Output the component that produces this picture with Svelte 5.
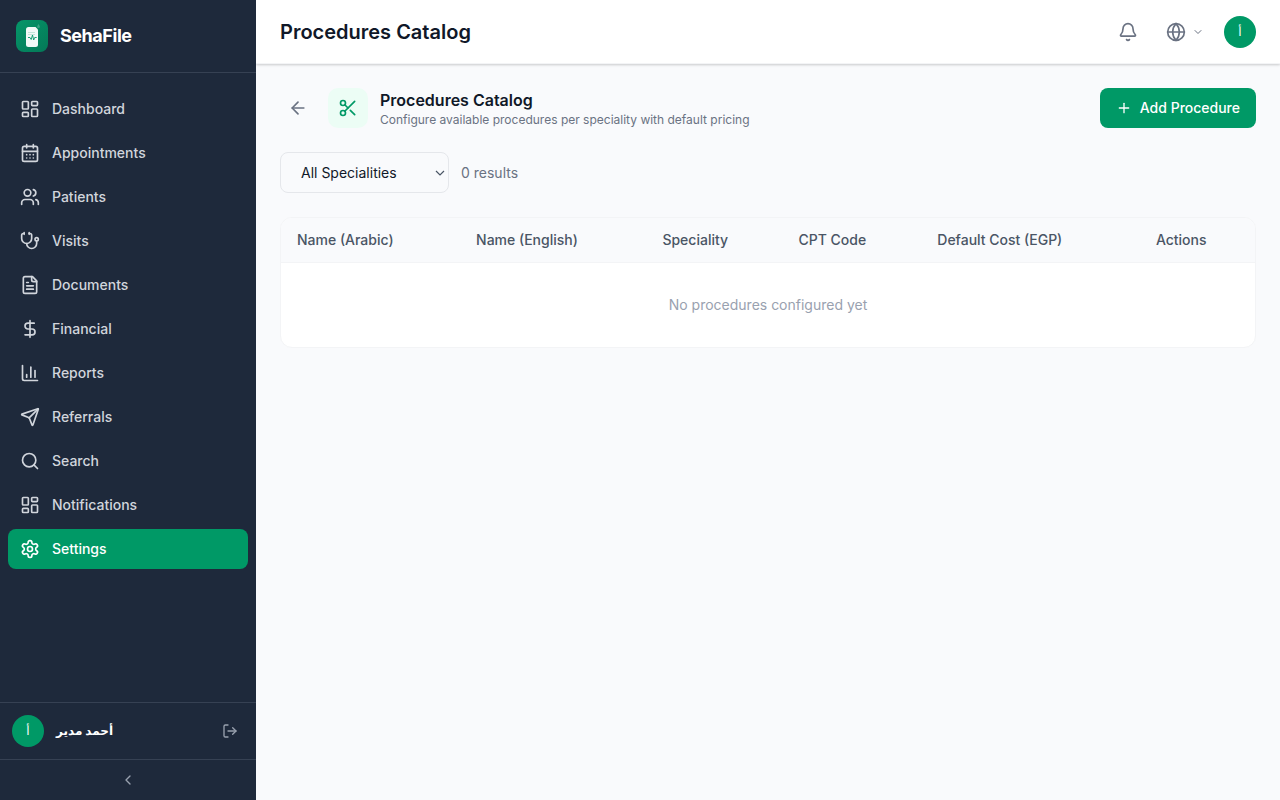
<script lang="ts">
	interface NavItem {
		label: string;
		icon: string[];
	}

	const grid = [
		'M4 3h5a1 1 0 0 1 1 1v7a1 1 0 0 1-1 1H4a1 1 0 0 1-1-1V4a1 1 0 0 1 1-1z',
		'M15 3h5a1 1 0 0 1 1 1v3a1 1 0 0 1-1 1h-5a1 1 0 0 1-1-1V4a1 1 0 0 1 1-1z',
		'M15 12h5a1 1 0 0 1 1 1v7a1 1 0 0 1-1 1h-5a1 1 0 0 1-1-1v-7a1 1 0 0 1 1-1z',
		'M4 16h5a1 1 0 0 1 1 1v3a1 1 0 0 1-1 1H4a1 1 0 0 1-1-1v-3a1 1 0 0 1 1-1z'
	];

	const navItems: NavItem[] = [
		{ label: 'Dashboard', icon: grid },
		{
			label: 'Appointments',
			icon: [
				'M8 2v4',
				'M16 2v4',
				'M5 4h14a2 2 0 0 1 2 2v14a2 2 0 0 1-2 2H5a2 2 0 0 1-2-2V6a2 2 0 0 1 2-2z',
				'M3 10h18',
				'M8 14h.01',
				'M12 14h.01',
				'M16 14h.01',
				'M8 18h.01',
				'M12 18h.01',
				'M16 18h.01'
			]
		},
		{
			label: 'Patients',
			icon: [
				'M16 21v-2a4 4 0 0 0-4-4H6a4 4 0 0 0-4 4v2',
				'M9 3a4 4 0 1 0 0 8a4 4 0 0 0 0-8z',
				'M22 21v-2a4 4 0 0 0-3-3.87',
				'M16 3.13a4 4 0 0 1 0 7.75'
			]
		},
		{
			label: 'Visits',
			icon: [
				'M11 2v2',
				'M5 2v2',
				'M5 3H4a2 2 0 0 0-2 2v4a6 6 0 0 0 12 0V5a2 2 0 0 0-2-2h-1',
				'M8 15a6 6 0 0 0 12 0v-3',
				'M20 8a2 2 0 1 0 0 4a2 2 0 0 0 0-4z'
			]
		},
		{
			label: 'Documents',
			icon: [
				'M15 2H6a2 2 0 0 0-2 2v16a2 2 0 0 0 2 2h12a2 2 0 0 0 2-2V7Z',
				'M14 2v4a2 2 0 0 0 2 2h4',
				'M10 9H8',
				'M16 13H8',
				'M16 17H8'
			]
		},
		{
			label: 'Financial',
			icon: ['M12 2v20', 'M17 5H9.5a3.5 3.5 0 0 0 0 7h5a3.5 3.5 0 0 1 0 7H6']
		},
		{
			label: 'Reports',
			icon: ['M3 3v16a2 2 0 0 0 2 2h16', 'M18 17V9', 'M13 17V5', 'M8 17v-3']
		},
		{
			label: 'Referrals',
			icon: [
				'M14.536 21.686a.5.5 0 0 0 .937-.024l6.5-19a.496.496 0 0 0-.635-.635l-19 6.5a.5.5 0 0 0-.024.937l7.93 3.18a2 2 0 0 1 1.112 1.11z',
				'm21.854 2.147-10.94 10.939'
			]
		},
		{ label: 'Search', icon: ['M11 3a8 8 0 1 0 0 16a8 8 0 0 0 0-16z', 'm21 21-4.3-4.3'] },
		{ label: 'Notifications', icon: grid },
		{
			label: 'Settings',
			icon: [
				'M12.22 2h-.44a2 2 0 0 0-2 2v.18a2 2 0 0 1-1 1.73l-.43.25a2 2 0 0 1-2 0l-.15-.08a2 2 0 0 0-2.73.73l-.22.38a2 2 0 0 0 .73 2.73l.15.1a2 2 0 0 1 1 1.72v.51a2 2 0 0 1-1 1.74l-.15.09a2 2 0 0 0-.73 2.73l.22.38a2 2 0 0 0 2.73.73l.15-.08a2 2 0 0 1 2 0l.43.25a2 2 0 0 1 1 1.73V20a2 2 0 0 0 2 2h.44a2 2 0 0 0 2-2v-.18a2 2 0 0 1 1-1.73l.43-.25a2 2 0 0 1 2 0l.15.08a2 2 0 0 0 2.73-.73l.22-.39a2 2 0 0 0-.73-2.73l-.15-.08a2 2 0 0 1-1-1.74v-.5a2 2 0 0 1 1-1.74l.15-.09a2 2 0 0 0 .73-2.73l-.22-.38a2 2 0 0 0-2.73-.73l-.15.08a2 2 0 0 1-2 0l-.43-.25a2 2 0 0 1-1-1.73V4a2 2 0 0 0-2-2z',
				'M12 9a3 3 0 1 0 0 6a3 3 0 0 0 0-6z'
			]
		}
	];

	const icons = {
		logout: ['m16 17 5-5-5-5', 'M21 12H9', 'M9 21H5a2 2 0 0 1-2-2V5a2 2 0 0 1 2-2h4'],
		chevronLeft: ['m15 18-6-6 6-6'],
		chevronDown: ['m6 9 6 6 6-6'],
		arrowLeft: ['m12 19-7-7 7-7', 'M19 12H5'],
		plus: ['M5 12h14', 'M12 5v14'],
		bell: [
			'M10.268 21a2 2 0 0 0 3.464 0',
			'M3.262 15.326A1 1 0 0 0 4 17h16a1 1 0 0 0 .74-1.673C19.41 13.956 18 12.499 18 8A6 6 0 0 0 6 8c0 4.499-1.411 5.956-2.738 7.326'
		],
		globe: [
			'M12 2a10 10 0 1 0 0 20a10 10 0 0 0 0-20z',
			'M12 2a14.5 14.5 0 0 0 0 20 14.5 14.5 0 0 0 0-20',
			'M2 12h20'
		],
		scissors: [
			'M6 3a3 3 0 1 0 0 6a3 3 0 0 0 0-6z',
			'M8.12 8.12 12 12',
			'M20 4 8.12 15.88',
			'M6 15a3 3 0 1 0 0 6a3 3 0 0 0 0-6z',
			'M14.8 14.8 20 20'
		]
	};

	const columns = [
		'Name (Arabic)',
		'Name (English)',
		'Speciality',
		'CPT Code',
		'Default Cost (EGP)',
		'Actions'
	];

	const specialities = ['Cardiology', 'Dermatology', 'Orthopedics', 'Pediatrics'];

	let active = $state('Settings');
	let speciality = $state('');
</script>

{#snippet icon(paths: string[], size: number)}
	<svg
		width={size}
		height={size}
		viewBox="0 0 24 24"
		fill="none"
		stroke="currentColor"
		stroke-width="2"
		stroke-linecap="round"
		stroke-linejoin="round"
		aria-hidden="true"
	>
		{#each paths as d}
			<path {d} />
		{/each}
	</svg>
{/snippet}

<div class="shell">
	<aside class="sidebar">
		<div class="brand">
			<svg class="logo" viewBox="0 0 32 32" aria-hidden="true">
				<defs>
					<linearGradient id="logo-bg" x1="0" y1="0" x2="1" y2="1">
						<stop offset="0" stop-color="#059669" />
						<stop offset="1" stop-color="#047857" />
					</linearGradient>
				</defs>
				<rect width="32" height="32" rx="8" fill="url(#logo-bg)" />
				<path
					d="M12.500 7h7l2.500 2.500V24.500a2.500 2.500 0 0 1-2.500 2.500h-7a2.500 2.500 0 0 1-2.500-2.500V9.500a2.500 2.500 0 0 1 2.500-2.500z"
					fill="#fff"
					fill-opacity=".95"
				/>
				<path d="M12 12.500h7M12 14.500h7" stroke="#059669" stroke-opacity=".25" stroke-width=".8" />
				<path
					d="M12 17.500h2l1.200 2 1.300-4.500 1.200 5 1-2.500h2"
					fill="none"
					stroke="#059669"
					stroke-width=".9"
				/>
				<path
					d="M22.500 4c1 1.500 1.300 2 1.300 2.800a1.300 1.300 0 0 1-2.600 0c0-.8.300-1.300 1.300-2.800z"
					fill="#fff"
					fill-opacity=".22"
				/>
			</svg>
			<span class="brand-name">SehaFile</span>
		</div>

		<nav class="nav">
			{#each navItems as item}
				<a
					href="#{item.label.toLowerCase()}"
					class="nav-link"
					class:active={active === item.label}
					aria-current={active === item.label ? 'page' : undefined}
					onclick={() => (active = item.label)}
				>
					{@render icon(item.icon, 20)}
					<span>{item.label}</span>
				</a>
			{/each}
		</nav>

		<div class="user">
			<span class="avatar">أ</span>
			<span class="user-name">أحمد مدير</span>
			<button class="logout" aria-label="Log out">{@render icon(icons.logout, 16)}</button>
		</div>
		<button class="collapse" aria-label="Collapse sidebar">
			{@render icon(icons.chevronLeft, 16)}
		</button>
	</aside>

	<div class="content">
		<header class="topbar">
			<h1>Procedures Catalog</h1>
			<div class="topbar-actions">
				<button class="icon-button" aria-label="Notifications">{@render icon(icons.bell, 20)}</button>
				<button class="language" aria-label="Language">
					{@render icon(icons.globe, 20)}
					{@render icon(icons.chevronDown, 12)}
				</button>
				<button class="avatar">أ</button>
			</div>
		</header>

		<main>
			<div class="page-head">
				<button class="icon-button" aria-label="Back">{@render icon(icons.arrowLeft, 20)}</button>
				<div class="page-icon">{@render icon(icons.scissors, 20)}</div>
				<div class="page-title">
					<h2>Procedures Catalog</h2>
					<p>Configure available procedures per speciality with default pricing</p>
				</div>
				<button class="add">
					{@render icon(icons.plus, 16)}
					Add Procedure
				</button>
			</div>

			<div class="filters">
				<div class="select-wrap">
					<select aria-label="Speciality" bind:value={speciality}>
						<option value="">All Specialities</option>
						{#each specialities as name}
							<option value={name}>{name}</option>
						{/each}
					</select>
					<svg class="select-arrow" viewBox="0 0 10 6" aria-hidden="true">
						<path d="M1 1l4 4 4-4" fill="none" stroke="currentColor" stroke-width="1.2" />
					</svg>
				</div>
				<span class="count">0 results</span>
			</div>

			<div class="table-card">
				<table>
					<thead>
						<tr>
							{#each columns as column}
								<th scope="col">{column}</th>
							{/each}
						</tr>
					</thead>
					<tbody>
						<tr>
							<td colspan={columns.length}>No procedures configured yet</td>
						</tr>
					</tbody>
				</table>
			</div>
		</main>
	</div>
</div>

<style>
	:global(body) {
		margin: 0;
		background: #f9fafc;
	}

	.shell {
		display: flex;
		min-height: 100vh;
		font-family: Inter, 'DejaVu Sans', sans-serif;
		font-size: 14px;
		line-height: 20px;
		color: #101828;
		background: #f9fafc;
	}

	.shell * {
		box-sizing: border-box;
	}

	svg {
		display: block;
		flex-shrink: 0;
	}

	h1,
	h2,
	p {
		margin: 0;
	}

	button {
		display: flex;
		align-items: center;
		justify-content: center;
		padding: 0;
		border: 0;
		background: none;
		font: inherit;
		color: inherit;
		cursor: pointer;
	}

	.sidebar {
		position: sticky;
		top: 0;
		display: flex;
		flex-direction: column;
		flex-shrink: 0;
		width: 256px;
		height: 100vh;
		background: #1e293b;
		color: #d1d5dc;
	}

	.brand {
		display: flex;
		align-items: center;
		gap: 12px;
		padding: 20px 16px;
		border-bottom: 1px solid #364153;
	}

	.logo {
		width: 32px;
		height: 32px;
	}

	.brand-name {
		font-size: 18px;
		line-height: 28px;
		font-weight: 700;
		letter-spacing: -0.025em;
		color: #fff;
	}

	.nav {
		display: flex;
		flex: 1;
		flex-direction: column;
		gap: 4px;
		padding: 16px 8px;
		overflow-y: auto;
	}

	.nav-link {
		display: flex;
		align-items: center;
		gap: 12px;
		padding: 10px 12px;
		border-radius: 8px;
		font-weight: 500;
		color: inherit;
		text-decoration: none;
	}

	.nav-link.active {
		background: #009966;
		color: #fff;
	}

	.user {
		display: flex;
		align-items: center;
		gap: 12px;
		padding: 12px;
		border-top: 1px solid #364153;
	}

	.user-name {
		flex: 1;
		font-size: 12px;
		font-weight: 600;
		color: #fff;
	}

	.logout {
		padding: 6px;
		color: #99a1af;
	}

	.collapse {
		padding: 12px;
		border-top: 1px solid #364153;
		color: #99a1af;
	}

	.avatar {
		display: flex;
		align-items: center;
		justify-content: center;
		width: 32px;
		height: 32px;
		border-radius: 50%;
		background: #009966;
		color: #fff;
		font-size: 12px;
		font-weight: 500;
	}

	.content {
		flex: 1;
		min-width: 0;
	}

	.topbar {
		display: flex;
		align-items: center;
		justify-content: space-between;
		height: 64px;
		padding: 0 24px;
		border-bottom: 1px solid #f3f4f6;
		background: #fff;
		box-shadow:
			0 1px 3px rgb(0 0 0 / 0.1),
			0 1px 2px rgb(0 0 0 / 0.1);
	}

	h1 {
		font-size: 20px;
		line-height: 28px;
		font-weight: 600;
	}

	.topbar-actions {
		display: flex;
		align-items: center;
		gap: 12px;
		color: #6a7282;
	}

	.icon-button {
		padding: 8px;
		color: #6a7282;
	}

	.language {
		gap: 6px;
		padding: 8px;
	}

	main {
		display: flex;
		flex-direction: column;
		gap: 24px;
		padding: 24px;
	}

	.page-head {
		display: flex;
		align-items: center;
		gap: 12px;
	}

	.page-icon {
		padding: 10px;
		border-radius: 10px;
		background: #ecfdf5;
		color: #009966;
	}

	.page-title {
		flex: 1;
	}

	h2 {
		font-size: 16px;
		line-height: 24px;
		font-weight: 600;
	}

	.page-title p {
		font-size: 12px;
		line-height: 16px;
		color: #6a7282;
	}

	.add {
		gap: 8px;
		padding: 10px 16px;
		border-radius: 8px;
		background: #009966;
		color: #fff;
		font-weight: 500;
	}

	.filters {
		display: flex;
		align-items: center;
		gap: 12px;
	}

	.select-wrap {
		position: relative;
	}

	select {
		display: block;
		min-width: 169px;
		height: 41px;
		padding: 0 32px 0 20px;
		border: 1px solid #e5e7eb;
		border-radius: 8px;
		background: #f9fafc;
		font: inherit;
		color: inherit;
		appearance: none;
	}

	.select-arrow {
		position: absolute;
		top: 50%;
		right: 4px;
		width: 10px;
		height: 6px;
		margin-top: -3px;
		color: #4a5565;
		pointer-events: none;
	}

	.count {
		color: #6a7282;
	}

	.table-card {
		overflow: hidden;
		border: 1px solid #f3f4f6;
		border-radius: 12px;
		background: #fff;
	}

	table {
		width: 100%;
		border-collapse: collapse;
	}

	thead tr {
		border-bottom: 1px solid #f3f4f6;
		background: #f9fafc;
	}

	th {
		padding: 12px 16px;
		font-weight: 500;
		text-align: left;
		color: #4a5565;
	}

	td {
		padding: 32px 16px;
		text-align: center;
		color: #99a1af;
	}
</style>
